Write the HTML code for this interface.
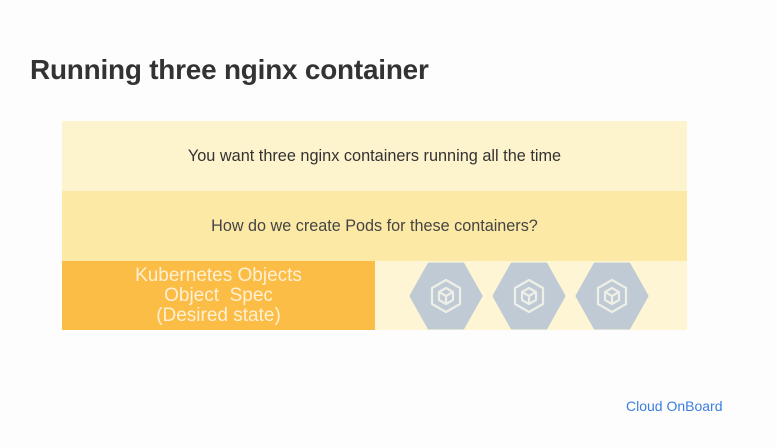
<!DOCTYPE html>
<html><head><meta charset="utf-8"><style>
html,body{margin:0;padding:0;}
body{width:777px;height:447px;background:#fdfdfd;position:relative;overflow:hidden;font-family:"Liberation Sans",sans-serif;}
.t{position:absolute;left:30px;top:54px;font-size:27.9px;font-weight:bold;color:#333;letter-spacing:-0.2px;}
.r{position:absolute;left:62px;width:625px;display:flex;align-items:center;justify-content:center;color:#333;}
.cb{position:absolute;left:626px;top:398px;font-size:14px;color:#3b7de0;}
.or{position:absolute;left:62px;top:261px;width:313px;height:69px;background:#fbbd45;color:#fdf0d4;font-size:19px;text-align:center;line-height:20px;padding-top:5px;box-sizing:border-box;}
</style></head><body>
<div class="t">Running three nginx container</div>
<div class="r" style="top:121px;height:70px;background:#fdf3cd;font-size:16.3px;">You want three nginx containers running all the time</div>
<div class="r" style="top:191px;height:70px;background:#fde9a6;color:#444;font-size:16.2px;">How do we create Pods for these containers?</div>
<div class="r" style="top:261px;height:69px;background:#fef5d4;"></div>
<div class="or">Kubernetes Objects<br>Object&nbsp; Spec<br>(Desired state)</div>
<svg style="position:absolute;left:0;top:0" width="777" height="447">
<defs><g id="h">
<polygon points="-35,0 -17,-32 17,-32 35,0 17,32 -17,32" fill="#bfcad4" stroke="#bfcad4" stroke-width="3" stroke-linejoin="round"/>
<g fill="none" stroke="#eef0e8" stroke-width="2.2" stroke-linejoin="round">
<polygon points="0,-16 14,-8 14,8 0,16 -14,8 -14,-8"/>
<polygon points="0,-8 7,-4 7,4 0,8 -7,4 -7,-4"/>
<path d="M-7,-4 L0,0 L7,-4 M0,0 L0,8"/>
</g></g></defs>
<use href="#h" x="446" y="296"/>
<use href="#h" x="529" y="296"/>
<use href="#h" x="612" y="296"/>
</svg>
<div class="cb">Cloud OnBoard</div>
</body></html>
